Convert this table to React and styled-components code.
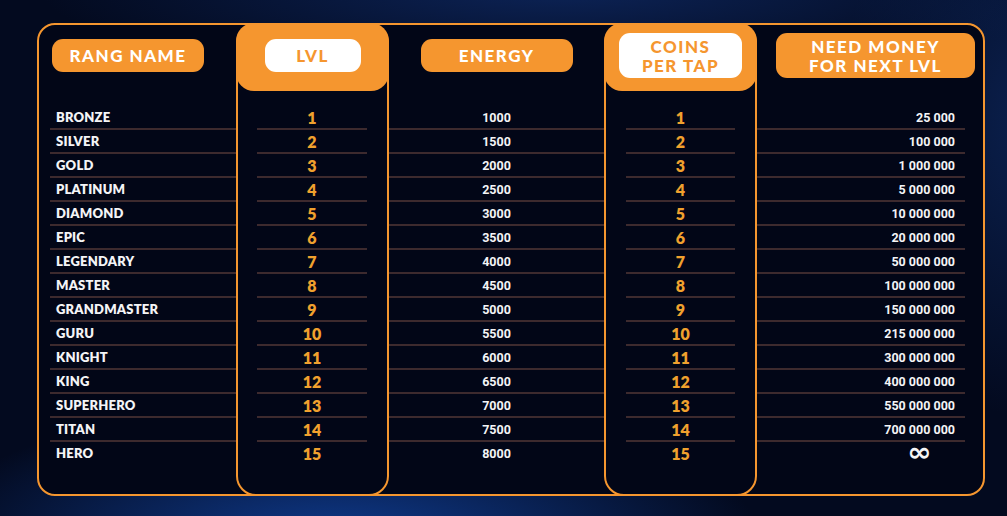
import React from 'react'
import styled, { createGlobalStyle } from 'styled-components'

const ORANGE = '#f5962f'
const LINE = '#3d2a2e'

const GlobalStyle = createGlobalStyle`
  html, body {
    margin: 0;
    padding: 0;
  }
  body {
    width: 1007px;
    height: 516px;
    overflow: hidden;
    background:
      radial-gradient(ellipse 420px 140px at 340px 540px, #0f3a8c 0%, rgba(15, 58, 140, 0) 100%),
      radial-gradient(ellipse 520px 90px at 560px -10px, #0c2356 0%, rgba(12, 35, 86, 0) 100%),
      radial-gradient(ellipse 200px 300px at 1040px 120px, #0b2150 0%, rgba(11, 33, 80, 0) 100%),
      #030a1f;
    font-family: Lato, 'Open Sans', sans-serif;
  }
`

const ranks = [
  'BRONZE', 'SILVER', 'GOLD', 'PLATINUM', 'DIAMOND', 'EPIC', 'LEGENDARY', 'MASTER',
  'GRANDMASTER', 'GURU', 'KNIGHT', 'KING', 'SUPERHERO', 'TITAN', 'HERO',
]

const money = [
  '25 000', '100 000', '1 000 000', '5 000 000', '10 000 000', '20 000 000',
  '50 000 000', '100 000 000', '150 000 000', '215 000 000', '300 000 000',
  '400 000 000', '550 000 000', '700 000 000', '∞',
]

const levels = ranks.map((_, i) => String(i + 1))
const energy = ranks.map((_, i) => String(1000 + i * 500))

const Page = styled.div`
  padding: 23px 22px 21px 37px;
`

const Panel = styled.div`
  width: 948px;
  height: 473px;
  box-sizing: border-box;
  border: 2px solid ${ORANGE};
  border-radius: 18px;
  background: #020617;
  display: grid;
  grid-template-columns: 197px 153px 215px 153px 226px;
`

const Column = styled.div`
  display: flex;
  flex-direction: column;
  margin: ${(p) => (p.$hot ? '-2px 0' : '0')};
  border: ${(p) => (p.$hot ? `2px solid ${ORANGE}` : 'none')};
  border-radius: 20px;
  box-sizing: border-box;
`

const Head = styled.div`
  height: ${(p) => (p.$hot ? '68px' : '66px')};
  box-sizing: border-box;
  display: flex;
  align-items: flex-start;
  justify-content: ${(p) => p.$justify || 'center'};
  padding-left: ${(p) => p.$padLeft || 0}px;
  padding-top: ${(p) => p.$padTop}px;
  background: ${(p) => (p.$hot ? ORANGE : 'transparent')};
  border-radius: 18px;
  margin: ${(p) => (p.$hot ? '-2px -2px 0' : '0')};
`

const Pill = styled.div`
  width: ${(p) => p.$w}px;
  height: ${(p) => p.$h || 33}px;
  border-radius: 11px;
  background: ${(p) => (p.$light ? '#ffffff' : ORANGE)};
  color: ${(p) => (p.$light ? ORANGE : '#ffffff')};
  display: flex;
  align-items: center;
  justify-content: center;
  text-align: center;
  font-family: Lato, sans-serif;
  font-weight: 900;
  font-size: 17px;
  line-height: 19px;
  letter-spacing: 1.5px;
`

const Rows = styled.div`
  display: flex;
  flex-direction: column;
  padding-top: 15px;
  margin: 0 ${(p) => p.$right || 0}px 0 ${(p) => p.$left || 0}px;
`

const Row = styled.div`
  height: 22px;
  border-bottom: 2px solid ${(p) => (p.$last ? 'transparent' : LINE)};
  display: flex;
  align-items: center;
  justify-content: ${(p) => p.$align || 'center'};
  padding: 0 ${(p) => p.$padRight || 0}px 0 ${(p) => p.$padLeft || 0}px;
`

const NameText = styled.span`
  font-family: Lato, sans-serif;
  font-weight: 800;
  font-size: 13px;
  color: #f4f4f6;
  letter-spacing: 0.2px;
`

const LevelText = styled.span`
  font-family: Lato, sans-serif;
  font-weight: 800;
  font-size: 16px;
  color: #f0a12e;
`

const NumberText = styled.span`
  font-family: Roboto, sans-serif;
  font-weight: 700;
  font-size: 12.5px;
  color: #f4f4f6;
`

const Infinity = styled.span`
  font-family: 'DejaVu Sans', sans-serif;
  font-weight: 700;
  font-size: 25px;
  line-height: 18px;
  color: #f4f4f6;
  margin-right: 25px;
  transform: scale(1.18, 1.05);
`

const DataColumn = ({ values, Text, left, right, align, padLeft, padRight }) => (
  <Rows $left={left} $right={right}>
    {values.map((v, i) => (
      <Row
        key={i}
        $last={i === values.length - 1}
        $align={align}
        $padLeft={padLeft}
        $padRight={padRight}
      >
        {v === '∞' ? <Infinity>∞</Infinity> : <Text>{v}</Text>}
      </Row>
    ))}
  </Rows>
)

const App = () => (
  <Page>
    <GlobalStyle />
    <Panel>
      <Column>
        <Head $justify="flex-start" $padLeft={13} $padTop={14}>
          <Pill $w={152}>RANG NAME</Pill>
        </Head>
        <DataColumn values={ranks} Text={NameText} left={11} align="flex-start" padLeft={6} />
      </Column>
      <Column $hot>
        <Head $hot $padTop={16}>
          <Pill $w={96} $light>LVL</Pill>
        </Head>
        <DataColumn values={levels} Text={LevelText} left={19} right={20} />
      </Column>
      <Column>
        <Head $padTop={14}>
          <Pill $w={152}>ENERGY</Pill>
        </Head>
        <DataColumn values={energy} Text={NumberText} />
      </Column>
      <Column $hot>
        <Head $hot $padTop={10}>
          <Pill $w={123} $h={45} $light>COINS<br />PER TAP</Pill>
        </Head>
        <DataColumn values={levels} Text={LevelText} left={20} right={20} />
      </Column>
      <Column>
        <Head $justify="flex-start" $padLeft={19} $padTop={8}>
          <Pill $w={199} $h={45}>NEED MONEY<br />FOR NEXT LVL</Pill>
        </Head>
        <DataColumn values={money} Text={NumberText} right={18} align="flex-end" padRight={10} />
      </Column>
    </Panel>
  </Page>
)

export default App
